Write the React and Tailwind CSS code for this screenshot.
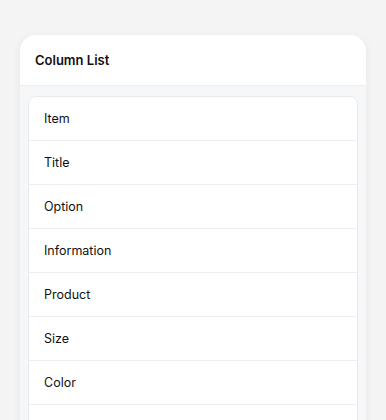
const columns = ['Item', 'Title', 'Option', 'Information', 'Product', 'Size', 'Color'];

export default function App() {
  return (
    <div className="min-h-screen bg-[#f4f4f4] px-5 pt-[35px] font-['Inter','Liberation_Sans',sans-serif] text-[#111]">
      <div className="rounded-2xl bg-white shadow-[0_2px_10px_rgba(0,0,0,0.06)] overflow-hidden">
        <div className="h-[51px] flex items-center px-[15px] pt-[2px] border-b border-[#eceef1]">
          <h2 className="text-[13px] font-semibold">Column List</h2>
        </div>
        <div className="bg-[#f6f7f9] px-2 pt-[10px] pb-3">
          <div className="rounded-lg border border-[#e8eaee] bg-white">
            {columns.map((col) => (
              <div key={col} className="h-11 flex items-center px-[15px] pt-[2px] border-b border-[#eceef1] text-[12.5px]">
                {col}
              </div>
            ))}
            {/* next row starts just above the fold */}
            <div className="h-11" />
          </div>
        </div>
      </div>
    </div>
  );
}
